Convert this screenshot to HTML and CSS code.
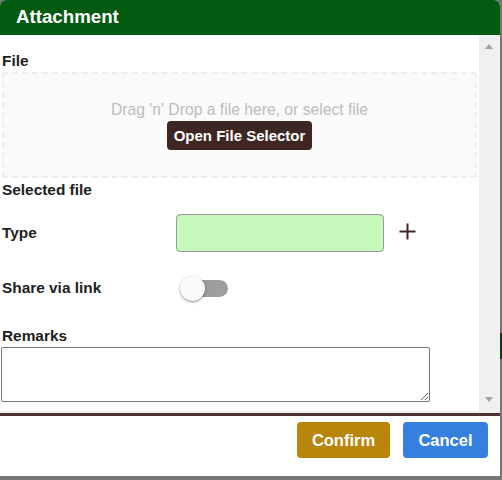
FILE: index.html
```html
<!DOCTYPE html>
<html lang="en">
<head>
<meta charset="utf-8">
<title>Attachment</title>
<link rel="stylesheet" href="styles.css">
</head>
<body>
<div class="backdrop-bit"></div>
<div class="dialog">
  <div class="dialog-header">Attachment</div>
  <div class="dialog-body">
    <div class="content">
      <div class="label label-file">File</div>
      <div class="dropzone">
        <p class="drop-text">Drag 'n' Drop a file here, or select file</p>
        <button class="btn-select" type="button">Open File Selector</button>
      </div>
      <div class="label label-selected">Selected file</div>
      <div class="row row-type">
        <div class="label">Type</div>
        <div class="type-input"></div>
        <svg class="plus" width="17" height="17" viewBox="0 0 17 17"><path d="M8.5 0.5v16M0.5 8.5h16" stroke="#3e2723" stroke-width="2" fill="none"/></svg>
      </div>
      <div class="row row-share">
        <div class="label">Share via link</div>
        <div class="switch"><span class="track"></span><span class="thumb"></span></div>
      </div>
      <div class="label label-remarks">Remarks</div>
      <textarea class="remarks"></textarea>
    </div>
    <div class="scrollbar">
      <span class="arrow-up"></span>
      <span class="arrow-down"></span>
    </div>
  </div>
  <div class="dialog-footer">
    <button class="btn btn-confirm" type="button">Confirm</button>
    <button class="btn btn-cancel" type="button">Cancel</button>
  </div>
</div>
</body>
</html>
```
FILE: styles.css
```css
html, body {
  margin: 0;
  padding: 0;
}
body {
  background: #767676;
  width: 502px;
  height: 480px;
  overflow: hidden;
  position: relative;
  font-family: "Liberation Sans", Arial, sans-serif;
}
.backdrop-bit {
  position: absolute;
  left: 500px;
  top: 333px;
  width: 2px;
  height: 26px;
  background: #0b3b10;
}
.dialog {
  width: 500px;
  height: 476px;
  background: #fff;
  border-radius: 6px 6px 0 0;
  overflow: hidden;
  display: flex;
  flex-direction: column;
}
.dialog-header {
  height: 35px;
  line-height: 34px;
  background: #035a10;
  color: #fff;
  font-weight: bold;
  font-size: 18.7px;
  padding-left: 16px;
  flex: none;
}
.dialog-body {
  height: 376px;
  display: flex;
  flex: none;
  overflow: hidden;
  border-bottom: 2px solid #f0f0f0;
}
.content {
  flex: 1;
  padding: 16px 2px 0 2px;
  color: #222;
}
.label {
  font-weight: bold;
  font-size: 15.4px;
  line-height: 20px;
  color: #212121;
}
.label-file {
  margin-bottom: 1px;
}
.dropzone {
  height: 106px;
  box-sizing: border-box;
  border: 2px dashed #eeeeee;
  border-radius: 2px;
  background: #fafafa;
  display: flex;
  flex-direction: column;
  align-items: center;
  padding-top: 26px;
}
.drop-text {
  margin: 0;
  font-size: 15.7px;
  line-height: 20px;
  color: #bdbdbd;
}
.btn-select {
  margin-top: 1px;
  height: 29px;
  padding: 0 7px;
  border: none;
  border-radius: 4px;
  background: #3e2723;
  color: #fff;
  font-family: "Liberation Sans", Arial, sans-serif;
  font-weight: bold;
  font-size: 15px;
}
.label-selected {
  margin-top: 2px;
}
.row {
  display: flex;
  align-items: center;
}
.row .label {
  width: 174px;
  flex: none;
}
.row-type {
  margin-top: 14px;
  height: 38px;
}
.type-input {
  width: 208px;
  height: 38px;
  box-sizing: border-box;
  border: 1px solid #9a9a9a;
  border-radius: 4px;
  background: #c6f8bc;
}
.plus {
  margin-left: 15px;
  margin-top: -4px;
}
.row-share {
  margin-top: 19px;
  height: 34px;
}
.switch {
  position: relative;
  width: 49px;
  height: 25px;
  margin-left: 4px;
}
.track {
  position: absolute;
  left: 6px;
  top: 4px;
  width: 42px;
  height: 17px;
  border-radius: 9px;
  background: #9e9e9e;
}
.thumb {
  position: absolute;
  left: 0;
  top: 0;
  width: 25px;
  height: 25px;
  border-radius: 50%;
  background: #fafafa;
  box-shadow: 0 1px 3px rgba(0,0,0,0.35), 0 1px 1px rgba(0,0,0,0.14);
}
.label-remarks {
  margin-top: 21px;
  margin-bottom: 1px;
}
.remarks {
  display: block;
  margin: 0 0 0 -1px;
  width: 429px;
  height: 55px;
  box-sizing: border-box;
  border: 1px solid #767676;
  border-radius: 2px;
  padding: 2px;
  resize: both;
  font-family: "Liberation Sans", Arial, sans-serif;
}
.scrollbar {
  width: 21px;
  flex: none;
  background: #f0f0f0;
  position: relative;
}
.arrow-up, .arrow-down {
  position: absolute;
  left: 6px;
  width: 0;
  height: 0;
  border-left: 4.5px solid transparent;
  border-right: 4.5px solid transparent;
}
.arrow-up {
  top: 9px;
  border-bottom: 5px solid #a3a3a3;
}
.arrow-down {
  bottom: 9px;
  border-top: 5px solid #a3a3a3;
}
.dialog-footer {
  flex: 1;
  border-top: 3px solid #4e342e;
  display: flex;
  justify-content: flex-end;
  align-items: flex-start;
  padding: 6px 12px 0 0;
  gap: 13px;
}
.btn {
  height: 36px;
  border: none;
  border-radius: 4px;
  color: #fff;
  font-family: "Liberation Sans", Arial, sans-serif;
  font-weight: bold;
  font-size: 16.5px;
}
.btn-confirm {
  width: 93px;
  background: #b8860b;
}
.btn-cancel {
  width: 85px;
  background: #3580de;
}
```
